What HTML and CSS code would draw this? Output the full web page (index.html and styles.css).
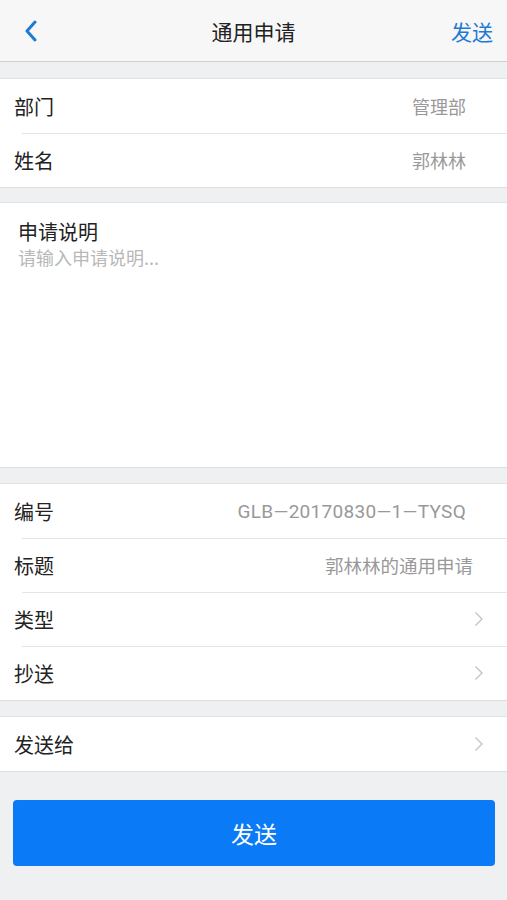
FILE: index.html
```html
<!DOCTYPE html>
<html lang="zh-CN">
<head>
  <meta charset="UTF-8" />
  <meta name="viewport" content="width=device-width, initial-scale=1.0" />
  <title>通用申请</title>
  <link rel="stylesheet" href="styles.css">
</head>
<body>
  <header class="navbar">
    <span class="back">
      <svg width="14" height="22" viewBox="0 0 14 22"><path d="M11 2 L3 11 L11 20" fill="none" stroke="#1f7ad3" stroke-width="3" stroke-linecap="round" stroke-linejoin="round"/></svg>
    </span>
    <h1 class="title">通用申请</h1>
    <span class="nav-action">发送</span>
  </header>

  <section class="group">
    <div class="row"><span class="label">部门</span><span class="value">管理部</span></div>
    <div class="row"><span class="label">姓名</span><span class="value">郭林林</span></div>
  </section>

  <section class="group note">
    <div class="note-title">申请说明</div>
    <div class="note-hint">请输入申请说明...</div>
  </section>

  <section class="group">
    <div class="row"><span class="label">编号</span><span class="value latin">GLB—20170830—1—TYSQ</span></div>
    <div class="row"><span class="label">标题</span><span class="value wide">郭林林的通用申请</span></div>
    <div class="row"><span class="label">类型</span><svg class="arrow" width="10" height="16" viewBox="0 0 10 16"><path d="M1.5 1.5 L8 8 L1.5 14.5" fill="none" stroke="#c2c2c2" stroke-width="1.3"/></svg></div>
    <div class="row"><span class="label">抄送</span><svg class="arrow" width="10" height="16" viewBox="0 0 10 16"><path d="M1.5 1.5 L8 8 L1.5 14.5" fill="none" stroke="#c2c2c2" stroke-width="1.3"/></svg></div>
  </section>

  <section class="group">
    <div class="row"><span class="label">发送给</span><svg class="arrow" width="10" height="16" viewBox="0 0 10 16"><path d="M1.5 1.5 L8 8 L1.5 14.5" fill="none" stroke="#c2c2c2" stroke-width="1.3"/></svg></div>
  </section>

  <div class="actions">
    <button class="send-btn">发送</button>
  </div>
</body>
</html>
```

FILE: styles.css
```css
body {
  margin: 0;
  font-family: "Noto Sans CJK SC", "Noto Sans", sans-serif;
  background: #eff0f2;
  color: #222;
}

.navbar {
  height: 61px;
  background: #f7f7f7;
  border-bottom: 1px solid #cfcfcf;
  display: flex;
  align-items: center;
  justify-content: space-between;
  padding: 0 14px 0 24px;
}

.back {
  display: flex;
  width: 60px;
}

.title {
  margin: 0;
  font-size: 21px;
  font-weight: normal;
  color: #222;
}

.nav-action {
  width: 70px;
  text-align: right;
  font-size: 21px;
  color: #1f7ad3;
}

.group {
  background: #fff;
  margin-top: 15px;
  border-top: 1px solid #e2e3e5;
  border-bottom: 1px solid #dcdde0;
}

.group:first-of-type {
  margin-top: 16px;
}

.row {
  height: 54px;
  display: flex;
  align-items: center;
  justify-content: space-between;
  padding: 0 41px 0 14px;
  position: relative;
}

.row + .row::before {
  content: "";
  position: absolute;
  top: 0;
  left: 22px;
  right: 0;
  border-top: 1px solid #e4e4e6;
}

.label {
  font-size: 20px;
  color: #222;
}

.value {
  font-size: 18px;
  color: #999;
}

.value.latin {
  font-family: Roboto, "Noto Sans CJK SC", sans-serif;
  font-size: 19px;
  letter-spacing: 0.3px;
}

.value.wide {
  font-size: 18.5px;
  margin-right: -7px;
}

.arrow {
  margin-right: -18px;
}

.note {
  margin-top: 14px;
  height: 266px;
  padding: 16px 18px 0;
  box-sizing: border-box;
}

.note-title {
  font-size: 20px;
  line-height: 26px;
  color: #222;
}

.note-hint {
  font-size: 18px;
  line-height: 24px;
  color: #b8b8b8;
}

.actions {
  padding: 28px 12px 0 13px;
}

.send-btn {
  width: 100%;
  height: 66px;
  border: none;
  border-radius: 4px;
  background: #0a7af7;
  color: #fff;
  font-family: inherit;
  font-size: 23px;
}
```
